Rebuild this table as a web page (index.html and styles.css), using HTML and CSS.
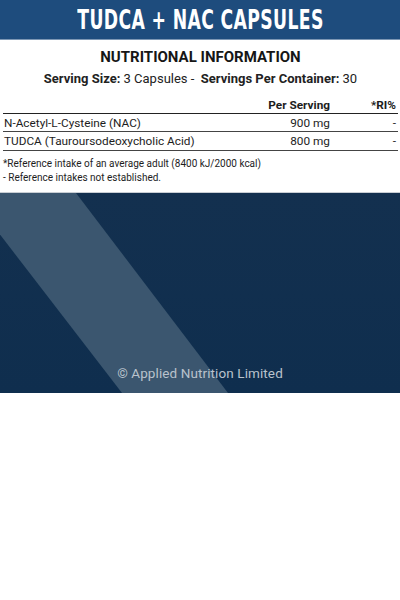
FILE: index.html
```html
<!DOCTYPE html>
<html>
<head>
<meta charset="utf-8">
<link rel="stylesheet" href="styles.css">
</head>
<body>
<header class="topbar">
  <h1 class="title">TUDCA + NAC CAPSULES</h1>
</header>
<main class="panel">
  <h2 class="heading">NUTRITIONAL INFORMATION</h2>
  <p class="serving"><b>Serving Size:</b> 3 Capsules -&nbsp; <b>Servings Per Container:</b> 30</p>
  <table class="facts">
    <colgroup><col class="c-name"><col class="c-amt"><col class="c-ri"></colgroup>
    <thead>
      <tr><th class="name"></th><th class="amt">Per Serving</th><th class="ri">*RI%</th></tr>
    </thead>
    <tbody>
      <tr><td class="name">N-Acetyl-L-Cysteine (NAC)</td><td class="amt">900 mg</td><td class="ri">-</td></tr>
      <tr><td class="name">TUDCA (Tauroursodeoxycholic Acid)</td><td class="amt">800 mg</td><td class="ri">-</td></tr>
    </tbody>
  </table>
  <div class="notes">
    <p>*Reference intake of an average adult (8400 kJ/2000 kcal)</p>
    <p>- Reference intakes not established.</p>
  </div>
</main>
<footer class="brand">
  <svg class="stripe" width="400" height="200" viewBox="0 0 400 200" aria-hidden="true">
    <polygon points="-32,0 76,0 228,200 122,200" fill="#3b566f"/>
  </svg>
  <p class="copy">© Applied Nutrition Limited</p>
</footer>
</body>
</html>
```
FILE: styles.css
```css
html, body {
  margin: 0;
  padding: 0;
  background: #ffffff;
}
body {
  width: 400px;
  font-family: "Roboto", "Liberation Sans", sans-serif;
  color: #1a1a1a;
}
.topbar {
  height: 39px;
  background: #1e4c7d;
  border-bottom: 1px solid #7d97b4;
  display: flex;
  align-items: center;
  justify-content: center;
}
.title {
  margin: 0;
  font-family: "DejaVu Sans Condensed", "DejaVu Sans", sans-serif;
  font-weight: bold;
  font-size: 27px;
  color: #ffffff;
  letter-spacing: 0.5px;
  transform: scaleX(0.71);
  white-space: nowrap;
  line-height: 1;
}
.panel {
  padding: 8px 2px 7px 3px;
}
.heading {
  margin: 0;
  text-align: center;
  font-size: 15px;
  font-weight: bold;
  line-height: 18px;
  color: #161616;
}
.serving {
  margin: 5px 0 0;
  text-align: center;
  font-size: 13px;
  line-height: 16px;
  color: #222;
}
.serving b { font-weight: bold; }
.facts {
  width: 395px;
  table-layout: fixed;
  border-collapse: collapse;
  margin-top: 9px;
  font-size: 11.8px;
}
.c-name { width: 230px; }
.c-amt { width: 97px; }
.c-ri { width: 68px; }
.facts th, .facts td {
  padding: 0;
  height: 17px;
  line-height: 14px;
  color: #1d1d1d;
  white-space: nowrap;
}
.facts tbody tr:last-child td { height: 18px; }
.facts th {
  font-weight: bold;
  border-bottom: 1px solid #222;
}
.facts td {
  border-bottom: 1px solid #444;
}
.facts .name { text-align: left; padding-left: 1px; }
.facts .amt { text-align: right; }
.facts .ri { text-align: right; padding-right: 2px; }
.notes {
  margin-top: 6px;
  font-size: 10px;
  line-height: 14px;
  color: #1d1d1d;
}
.notes p { margin: 0; }
.brand {
  position: relative;
  height: 200px;
  border-top: 1px solid #c9ced4;
  background: linear-gradient(180deg, #13304f 0%, #0f2e4e 100%);
  overflow: hidden;
  display: flex;
  flex-direction: column;
  justify-content: flex-end;
  align-items: center;
}
.stripe {
  position: absolute;
  top: 0;
  left: 0;
}
.copy {
  position: relative;
  margin: 0 0 12px;
  font-size: 13.5px;
  color: #b9c2cc;
  letter-spacing: 0.1px;
}
```
